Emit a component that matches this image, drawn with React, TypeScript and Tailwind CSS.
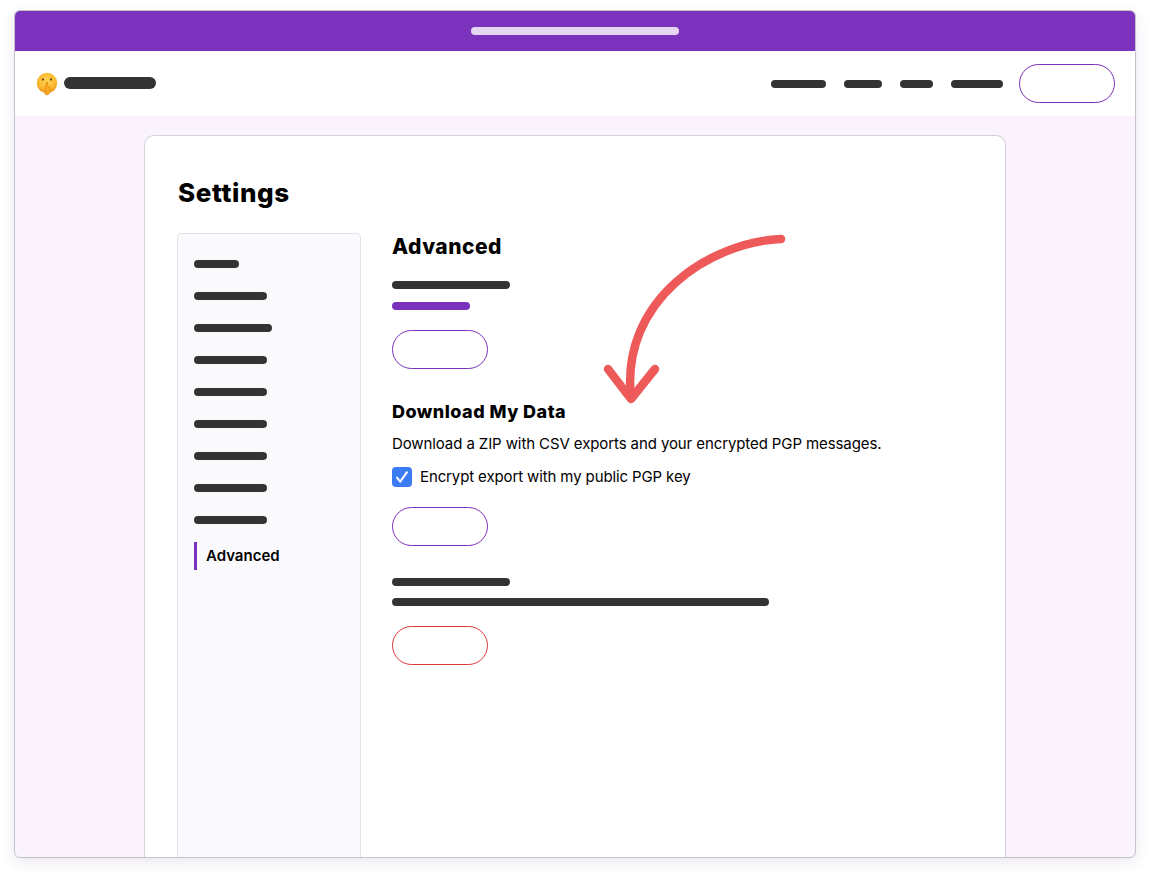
const Bar = ({ className }: { className: string }) => (
  <div className={`h-2 rounded-full bg-[#333333] ${className}`} />
);

const PillButton = ({ className }: { className: string }) => (
  <div className={`h-[39px] w-[96px] rounded-full border bg-white ${className}`} />
);

const ShushEmoji = () => (
  <svg width="22" height="24" viewBox="0 0 22 24" className="shrink-0">
    <defs>
      <radialGradient id="face" cx="50%" cy="40%" r="60%">
        <stop offset="0%" stopColor="#ffd65a" />
        <stop offset="70%" stopColor="#fcb92e" />
        <stop offset="100%" stopColor="#ef8f1c" />
      </radialGradient>
    </defs>
    <circle cx="11" cy="11" r="10.2" fill="url(#face)" />
    <ellipse cx="7" cy="7.4" rx="1" ry="1.2" fill="#6b3f10" />
    <ellipse cx="15" cy="7.4" rx="1" ry="1.2" fill="#6b3f10" />
    <path
      d="M10.2 10.5c0-.9 1.3-.9 1.4 0l.4 4 1.8.7c.9.4 1.1 1.3.9 2.3l-.7 2.6c-.4 1.5-1.4 2.5-2.9 2.8-1.6.2-2.5-.9-2.5-2.4l.4-4z"
      fill="#f6a821"
      stroke="#d97f12"
      strokeWidth=".5"
    />
  </svg>
);

const sideWidths = ["w-[45px]", "w-[73px]", "w-[78px]", "w-[73px]", "w-[73px]", "w-[73px]", "w-[73px]", "w-[73px]", "w-[73px]"];

export default function App() {
  return (
    <div className="relative h-[876px] w-[1150px] overflow-hidden bg-white pt-[10px] pl-[14px] font-['Inter',sans-serif] text-black">
      <div className="flex h-[848px] w-[1122px] flex-col overflow-hidden rounded-[6px] border border-[#c6c2cb] bg-[#faf3fe] shadow-[0_4px_14px_rgba(80,60,120,0.12)]">
        {/* title bar */}
        <div className="flex h-10 shrink-0 items-center justify-center bg-[#7b32bd]">
          <div className="h-2 w-[208px] rounded-full bg-[#e5d6f3]" />
        </div>

        {/* nav */}
        <div className="flex h-[65px] shrink-0 items-center justify-between bg-white pl-[21px] pr-5">
          <div className="flex items-center gap-[6px]">
            <ShushEmoji />
            <div className="mb-[1px] h-3 w-[92px] rounded-full bg-[#333333]" />
          </div>
          <div className="flex items-center">
            <div className="mr-4 flex items-center gap-[18px]">
              <Bar className="w-[55px]" />
              <Bar className="w-[38px]" />
              <Bar className="w-[33px]" />
              <Bar className="w-[52px]" />
            </div>
            <PillButton className="border-[#7b32bd]" />
          </div>
        </div>

        {/* card */}
        <div className="mt-[19px] ml-[129px] flex w-[862px] flex-1 flex-col rounded-t-[10px] border border-b-0 border-[#d4d1d9] bg-white px-8 pt-[41px]">
          <h1 className="pl-[1px] text-[26px] leading-8 font-extrabold tracking-[0.6px]">Settings</h1>
          <div className="mt-6 flex flex-1 gap-[31px]">
            <div className="flex w-[184px] shrink-0 flex-col rounded-t-[5px] border border-b-0 border-[#e0e0e6] bg-[#fafafc] pt-[26px] pl-4">
              <div className="flex flex-col gap-6">
                {sideWidths.map((w, i) => (
                  <Bar key={i} className={w} />
                ))}
              </div>
              <div className="mt-[18px] flex h-7 items-center border-l-[3px] border-[#7b32bd] pl-[9px] text-[15px] font-semibold">
                Advanced
              </div>
            </div>

            <div className="flex-1">
              <h2 className="text-[21px] leading-7 font-extrabold tracking-[0.5px]">Advanced</h2>
              <Bar className="mt-5 w-[118px]" />
              <div className="mt-[13px] h-2 w-[78px] rounded-full bg-[#7b32bd]" />
              <PillButton className="mt-5 border-[#7b32bd]" />

              <h3 className="mt-[31px] text-[18px] leading-6 font-extrabold tracking-[0.46px]">Download My Data</h3>
              <p className="mt-[8px] text-[15px] leading-6 tracking-[-0.1px]">
                Download a ZIP with CSV exports and your encrypted PGP messages.
              </p>
              <label className="mt-[9px] flex items-center gap-2 text-[15px] leading-6 tracking-[-0.12px]">
                <span className="flex h-5 w-5 items-center justify-center rounded-[4px] bg-[#3b7cf5]">
                  <svg width="16" height="16" viewBox="0 0 16 16" fill="none">
                    <path d="M3 8.6 6.2 12.6 13 3.2" stroke="white" strokeWidth="2" strokeLinecap="round" strokeLinejoin="round" />
                  </svg>
                </span>
                Encrypt export with my public PGP key
              </label>
              <PillButton className="mt-[18px] border-[#7b32bd]" />

              <Bar className="mt-8 w-[118px]" />
              <Bar className="mt-3 w-[377px]" />
              <PillButton className="mt-5 border-[#e0383b]" />
            </div>
          </div>
        </div>
      </div>

      {/* hand drawn arrow */}
      <svg
        width="210"
        height="190"
        viewBox="0 0 210 190"
        fill="none"
        className="absolute left-[590px] top-[220px]"
      >
        <path d="M191 19C120 22 30 80 41 178" stroke="#ee5a5a" strokeWidth="8.5" strokeLinecap="round" />
        <path d="M18 149 41 179 65 149" stroke="#ee5a5a" strokeWidth="8.5" strokeLinecap="round" strokeLinejoin="round" />
      </svg>
    </div>
  );
}
